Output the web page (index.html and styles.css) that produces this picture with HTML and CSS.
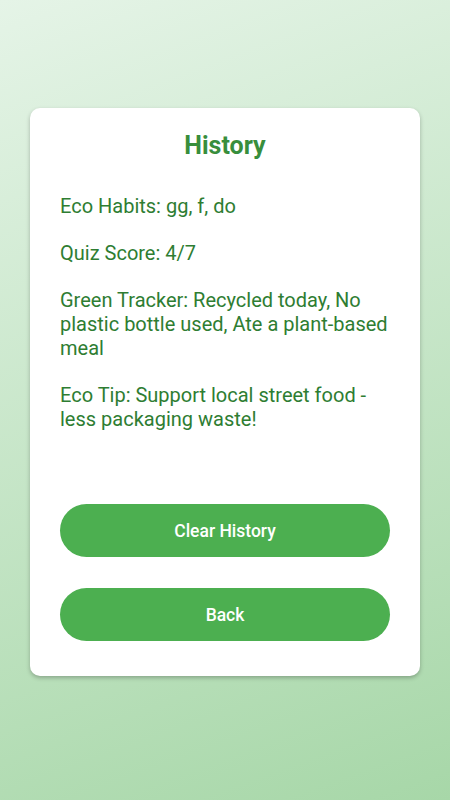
FILE: index.html
```html
<!DOCTYPE html>
<html lang="en">
<head>
    <meta charset="UTF-8">
    <meta name="viewport" content="width=device-width, initial-scale=1.0">
    <title>History</title>
    <link rel="stylesheet" href="styles.css">
</head>
<body>
    <div class="card">
        <h1 class="title">History</h1>
        <div class="entries">
            <p class="entry">Eco Habits: gg, f, do</p>
            <p class="entry">Quiz Score: 4/7</p>
            <p class="entry">Green Tracker: Recycled today, No plastic bottle used, Ate a plant-based meal</p>
            <p class="entry">Eco Tip: Support local street food - less packaging waste!</p>
        </div>
        <div class="actions">
            <button class="btn">Clear History</button>
            <button class="btn">Back</button>
        </div>
    </div>
</body>
</html>
```

FILE: styles.css
```css
html
{
    height: 100%;
}
body
{
    font-family: Roboto, "Liberation Sans", sans-serif;
    margin: 0;
    min-height: 100%;
    background: linear-gradient(160deg, #e5f4e7 0%, #a7d7a8 100%);
    padding: 108px 30px 0;
    box-sizing: border-box;
}
.card
{
    background: #ffffff;
    border-radius: 10px;
    box-shadow: 0px 2px 4px rgba(0, 0, 0, 0.25);
    padding: 24px 30px 35px;
    height: 568px;
    box-sizing: border-box;
    display: flex;
    flex-direction: column;
}
.title
{
    margin: 0;
    font-size: 25px;
    line-height: 28px;
    font-weight: bold;
    color: #388e3c;
    text-align: center;
}
.entries
{
    margin-top: 34px;
    display: flex;
    flex-direction: column;
    gap: 23px;
}
.entry
{
    margin: 0;
    font-size: 20px;
    line-height: 24px;
    color: #2e7d32;
}
.actions
{
    margin-top: auto;
    display: flex;
    flex-direction: column;
    gap: 31px;
}
.btn
{
    height: 53px;
    border: none;
    border-radius: 27px;
    background-color: #4caf50;
    color: white;
    font-family: Roboto, "Liberation Sans", sans-serif;
    font-size: 17.5px;
    font-weight: 500;
    cursor: pointer;
}
```
